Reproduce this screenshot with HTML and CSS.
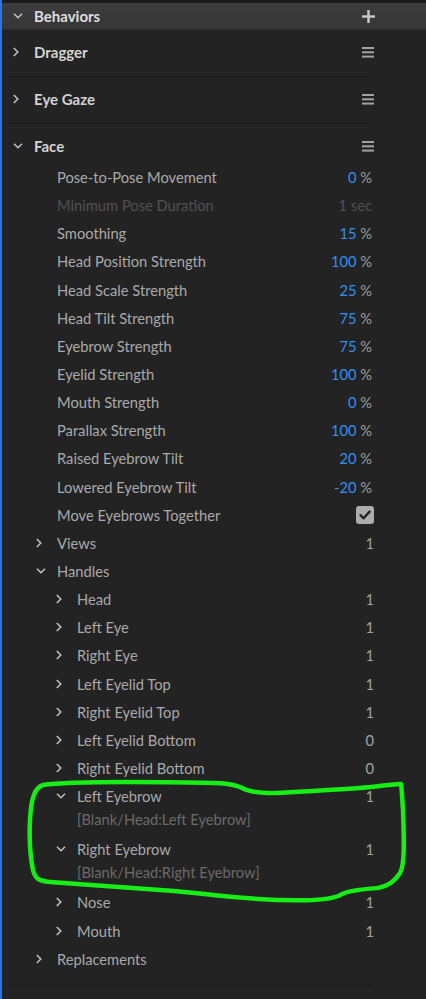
FILE: index.html
```html
<!DOCTYPE html>
<html>
<head>
<meta charset="utf-8">
<link rel="stylesheet" href="styles.css">
</head>
<body>
<div class="app">
  <div class="topline"></div>
  <div class="bar">
    <span class="chev"><svg width="10" height="6" viewBox="0 0 10 6"><path d="M1 0.8 L5 4.8 L9 0.8" /></svg></span>
    <span class="bar-title">Behaviors</span>
    <span class="plus"><svg width="13" height="13" viewBox="0 0 13 13"><rect x="5.3" y="0" width="2.4" height="13"/><rect x="0" y="5.3" width="13" height="2.4"/></svg></span>
  </div>
  <div class="panel">
    <section class="sec collapsed">
      <div class="sec-head">
        <span class="chev"><svg width="6" height="10" viewBox="0 0 6 10"><path d="M0.8 1 L4.8 5 L0.8 9" /></svg></span>
        <span class="sec-title">Dragger</span>
        <span class="menu"><svg width="12" height="11" viewBox="0 0 12 11"><rect x="0" y="0" width="12" height="2"/><rect x="0" y="4.3" width="12" height="2"/><rect x="0" y="8.6" width="12" height="2"/></svg></span>
      </div>
    </section>
    <section class="sec collapsed">
      <div class="sec-head">
        <span class="chev"><svg width="6" height="10" viewBox="0 0 6 10"><path d="M0.8 1 L4.8 5 L0.8 9" /></svg></span>
        <span class="sec-title">Eye Gaze</span>
        <span class="menu"><svg width="12" height="11" viewBox="0 0 12 11"><rect x="0" y="0" width="12" height="2"/><rect x="0" y="4.3" width="12" height="2"/><rect x="0" y="8.6" width="12" height="2"/></svg></span>
      </div>
    </section>
    <section class="sec open">
      <div class="sec-head">
        <span class="chev"><svg width="10" height="6" viewBox="0 0 10 6"><path d="M1 0.8 L5 4.8 L9 0.8" /></svg></span>
        <span class="sec-title">Face</span>
        <span class="menu"><svg width="12" height="11" viewBox="0 0 12 11"><rect x="0" y="0" width="12" height="2"/><rect x="0" y="4.3" width="12" height="2"/><rect x="0" y="8.6" width="12" height="2"/></svg></span>
      </div>
      <div class="rows">
        <div class="row prop"><span class="label">Pose-to-Pose Movement</span><span class="val"><span class="num">0</span> %</span></div>
        <div class="row prop disabled"><span class="label">Minimum Pose Duration</span><span class="val">1 sec</span></div>
        <div class="row prop"><span class="label">Smoothing</span><span class="val"><span class="num">15</span> %</span></div>
        <div class="row prop"><span class="label">Head Position Strength</span><span class="val"><span class="num">100</span> %</span></div>
        <div class="row prop"><span class="label">Head Scale Strength</span><span class="val"><span class="num">25</span> %</span></div>
        <div class="row prop"><span class="label">Head Tilt Strength</span><span class="val"><span class="num">75</span> %</span></div>
        <div class="row prop"><span class="label">Eyebrow Strength</span><span class="val"><span class="num">75</span> %</span></div>
        <div class="row prop"><span class="label">Eyelid Strength</span><span class="val"><span class="num">100</span> %</span></div>
        <div class="row prop"><span class="label">Mouth Strength</span><span class="val"><span class="num">0</span> %</span></div>
        <div class="row prop"><span class="label">Parallax Strength</span><span class="val"><span class="num">100</span> %</span></div>
        <div class="row prop"><span class="label">Raised Eyebrow Tilt</span><span class="val"><span class="num">20</span> %</span></div>
        <div class="row prop"><span class="label">Lowered Eyebrow Tilt</span><span class="val"><span class="num">-20</span> %</span></div>
        <div class="row prop"><span class="label">Move Eyebrows Together</span><span class="check"><svg width="18" height="18" viewBox="0 0 18 18"><path d="M4.5 9.2 L7.6 12.3 L13.6 5.6" /></svg></span></div>
        <div class="row lvl1"><span class="chev"><svg width="6" height="10" viewBox="0 0 6 10"><path d="M0.8 1 L4.8 5 L0.8 9" /></svg></span><span class="label">Views</span><span class="count">1</span></div>
        <div class="row lvl1"><span class="chev"><svg width="10" height="6" viewBox="0 0 10 6"><path d="M1 0.8 L5 4.8 L9 0.8" /></svg></span><span class="label">Handles</span></div>
        <div class="row lvl2"><span class="chev"><svg width="6" height="10" viewBox="0 0 6 10"><path d="M0.8 1 L4.8 5 L0.8 9" /></svg></span><span class="label">Head</span><span class="count">1</span></div>
        <div class="row lvl2"><span class="chev"><svg width="6" height="10" viewBox="0 0 6 10"><path d="M0.8 1 L4.8 5 L0.8 9" /></svg></span><span class="label">Left Eye</span><span class="count">1</span></div>
        <div class="row lvl2"><span class="chev"><svg width="6" height="10" viewBox="0 0 6 10"><path d="M0.8 1 L4.8 5 L0.8 9" /></svg></span><span class="label">Right Eye</span><span class="count">1</span></div>
        <div class="row lvl2"><span class="chev"><svg width="6" height="10" viewBox="0 0 6 10"><path d="M0.8 1 L4.8 5 L0.8 9" /></svg></span><span class="label">Left Eyelid Top</span><span class="count">1</span></div>
        <div class="row lvl2"><span class="chev"><svg width="6" height="10" viewBox="0 0 6 10"><path d="M0.8 1 L4.8 5 L0.8 9" /></svg></span><span class="label">Right Eyelid Top</span><span class="count">1</span></div>
        <div class="row lvl2"><span class="chev"><svg width="6" height="10" viewBox="0 0 6 10"><path d="M0.8 1 L4.8 5 L0.8 9" /></svg></span><span class="label">Left Eyelid Bottom</span><span class="count">0</span></div>
        <div class="row lvl2"><span class="chev"><svg width="6" height="10" viewBox="0 0 6 10"><path d="M0.8 1 L4.8 5 L0.8 9" /></svg></span><span class="label">Right Eyelid Bottom</span><span class="count">0</span></div>
        <div class="row lvl2"><span class="chev"><svg width="10" height="6" viewBox="0 0 10 6"><path d="M1 0.8 L5 4.8 L9 0.8" /></svg></span><span class="label">Left Eyebrow</span><span class="count">1</span></div>
        <div class="sub">[Blank/Head:Left Eyebrow]</div>
        <div class="row lvl2"><span class="chev"><svg width="10" height="6" viewBox="0 0 10 6"><path d="M1 0.8 L5 4.8 L9 0.8" /></svg></span><span class="label">Right Eyebrow</span><span class="count">1</span></div>
        <div class="sub">[Blank/Head:Right Eyebrow]</div>
        <div class="row lvl2"><span class="chev"><svg width="6" height="10" viewBox="0 0 6 10"><path d="M0.8 1 L4.8 5 L0.8 9" /></svg></span><span class="label">Nose</span><span class="count">1</span></div>
        <div class="row lvl2"><span class="chev"><svg width="6" height="10" viewBox="0 0 6 10"><path d="M0.8 1 L4.8 5 L0.8 9" /></svg></span><span class="label">Mouth</span><span class="count">1</span></div>
        <div class="row lvl1"><span class="chev"><svg width="6" height="10" viewBox="0 0 6 10"><path d="M0.8 1 L4.8 5 L0.8 9" /></svg></span><span class="label">Replacements</span></div>
      </div>
    </section>
  </div>
  <svg class="annot" width="426" height="999" viewBox="0 0 426 999">
    <path d="M213 783 C 160 782, 70 781, 43 785 C 34 788, 31 800, 30 820 C 29 840, 31 860, 33 870 C 35 878, 38 881, 50 882 C 80 884, 120 887, 160 890 C 190 892, 205 894, 213 895 C 240 898, 280 901, 313 900 C 330 899, 338 897, 342 894 C 350 890, 365 889, 378 888 C 388 886, 394 882, 400 873 C 405 864, 404 840, 403 810 C 402 798, 402 790, 401 784 C 385 785, 375 787, 360 788 C 330 790, 300 792, 275 793 C 255 793, 247 791, 240 787 C 232 784, 222 783, 213 783 Z" />
  </svg>
</div>
</body>
</html>
```

FILE: styles.css
```css
* { box-sizing: border-box; }
html, body { margin: 0; padding: 0; background: #232323; }
body { font-family: Lato, "Liberation Sans", sans-serif; }

.app {
  position: relative;
  width: 426px;
  height: 999px;
  background: #232323;
  border-left: 2px solid #1f7ae2;
  overflow: hidden;
}

.topline { height: 3px; background: #1b1b1b; }

.bar {
  height: 27px;
  display: flex;
  align-items: center;
  padding-left: 11px;
  padding-right: 51px;
  background: linear-gradient(#3d3d3d, #363636);
  border-bottom: 1px solid #2c2c2c;
}
.bar-title {
  font-size: 15px;
  font-weight: 700;
  color: #dedede;
}
.plus { margin-left: auto; display: flex; }
.plus svg { fill: #c9c9c9; }

.chev {
  width: 21px;
  flex: none;
  display: flex;
  align-items: center;
}
.chev svg { fill: none; stroke: #c4c4c4; stroke-width: 1.5; }

.panel { padding-left: 5px; }

.sec {
  width: 367px;
  border-bottom: 1px solid #1a1a1a;
}
.sec.collapsed { padding-bottom: 7px; }
.sec.open { padding-bottom: 12px; }

.sec-head {
  height: 39px;
  padding-top: 11px;
  padding-left: 6px;
  display: flex;
  align-items: flex-start;
}
.sec-head .chev, .sec-head .sec-title, .sec-head .menu { height: 22px; }
.sec-title {
  font-size: 15px;
  font-weight: 700;
  color: #d2d2d2;
  line-height: 22px;
}
.menu {
  margin-left: auto;
  display: flex;
  align-items: center;
}
.menu svg { fill: #a3a3a3; }

.row {
  height: 28.15px;
  display: flex;
  align-items: center;
  font-size: 14.7px;
  color: #a9a9a9;
}
.row.prop { padding-left: 50px; }
.row.lvl1 { padding-left: 29px; }
.row.lvl2 { padding-left: 49px; }

.label { white-space: nowrap; }
.val {
  margin-left: auto;
  margin-right: 2px;
  color: #9e9e9e;
  white-space: nowrap;
}
.num { color: #3290ee; }
.row.disabled { color: #515151; }
.row.disabled .val { color: #515151; }

.count {
  margin-left: auto;
  color: #a3a3a3;
}

.check {
  margin-left: auto;
  width: 18px;
  height: 18px;
  border-radius: 3px;
  background: #acacac;
  display: flex;
}
.check svg { fill: none; stroke: #262626; stroke-width: 2.4; stroke-linecap: round; stroke-linejoin: round; }

.sub {
  height: 25px;
  line-height: 19px;
  padding-left: 70px;
  font-size: 14.7px;
  color: #6a6a6a;
  white-space: nowrap;
}

.annot {
  position: absolute;
  left: -2px;
  top: 0;
  pointer-events: none;
}
.annot path {
  fill: none;
  stroke: #16ee16;
  stroke-width: 4.5;
  stroke-linecap: round;
  stroke-linejoin: round;
}
```
